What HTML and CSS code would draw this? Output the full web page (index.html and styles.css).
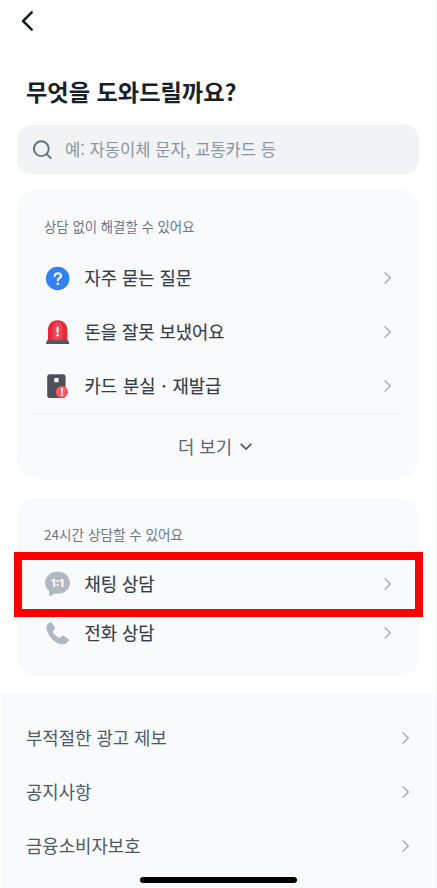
FILE: index.html
```html
<!DOCTYPE html>
<html lang="ko">
<head>
<meta charset="utf-8">
<title>고객센터</title>
<link rel="stylesheet" href="styles.css">
</head>
<body>
<svg class="defs" width="0" height="0">
  <symbol id="next" viewBox="0 0 8 12"><path d="M1.2 1 6.3 6l-5.1 5" fill="none" stroke="currentColor" stroke-width="1.7" stroke-linecap="round" stroke-linejoin="round"/></symbol>
</svg>
<main class="screen">
  <header class="topbar">
    <svg width="14" height="22" viewBox="0 0 14 22"><path d="M11.700 2.300 3.100 11l8.600 8.700" fill="none" stroke="#171c26" stroke-width="2.500" stroke-linecap="round" stroke-linejoin="round"/></svg>
  </header>
  <h1 class="title">무엇을 도와드릴까요?</h1>
  <div class="search">
    <svg width="20" height="20" viewBox="0 0 20 20"><g fill="none" stroke="#64707f" stroke-width="1.9" stroke-linecap="round"><circle cx="8.3" cy="8.7" r="7.4"/><path d="m13.8 14.2 4 3.9"/></g></svg>
    <span>예: 자동이체 문자, 교통카드 등</span>
  </div>

  <section class="card self-help">
    <h2 class="caption">상담 없이 해결할 수 있어요</h2>
    <ul class="list">
      <li class="row">
        <svg class="icon" viewBox="0 0 26 26"><circle cx="12.700" cy="13.500" r="11.8" fill="#3182f6"/><path d="M9.700 11c0-3.700 6.300-3.600 6.300-.1 0 2.200-3.200 2.200-3.200 4.400" fill="none" stroke="#fff" stroke-width="2.200" stroke-linecap="round"/><circle cx="12.800" cy="18.800" r="1.35" fill="#fff"/></svg>
        <span class="label">자주 묻는 질문</span><svg class="next"><use href="#next"/></svg>
      </li>
      <li class="row">
        <svg class="icon" viewBox="0 0 26 26"><path d="M2.900 22V11.400C2.900 5 7 1.200 12.600 1.200s9.800 3.800 9.800 10.200V22z" fill="#e42939"/><path d="M7.600 22V9.500c0-8.700 10-8.700 10 0V22z" fill="#f04452"/><path d="M2 21.300h21.200l1.200 3.700H.9z" fill="#4e5968"/><path d="M12.600 8.600v4.600" stroke="#fff" stroke-width="2.100" stroke-linecap="round"/><circle cx="12.600" cy="16.300" r="1.2" fill="#fff"/></svg>
        <span class="label">돈을 잘못 보냈어요</span><svg class="next"><use href="#next"/></svg>
      </li>
      <li class="row">
        <svg class="icon" viewBox="0 0 26 26"><rect x="2.2" y="1.200" width="18.4" height="23.800" rx="2.7" fill="#4c515c"/><rect x="9.3" y="5" width="4.2" height="4.3" rx=".5" fill="#fff"/><circle cx="17" cy="19" r="6.1" fill="#ff5963"/><path d="M17 15.700v3.700" stroke="#fff" stroke-width="1.8" stroke-linecap="round"/><circle cx="17" cy="22" r="1" fill="#fff"/></svg>
        <span class="label wide">카드 분실 · 재발급</span><svg class="next"><use href="#next"/></svg>
      </li>
    </ul>
    <div class="more"><span>더 보기</span><svg width="12" height="8" viewBox="0 0 12 8"><path d="m1.200 1.300 4.800 4.900 4.800-4.900" fill="none" stroke="#57616f" stroke-width="1.8" stroke-linecap="round" stroke-linejoin="round"/></svg></div>
  </section>

  <section class="card contact">
    <h2 class="caption">24시간 상담할 수 있어요</h2>
    <ul class="list">
      <li class="row highlighted">
        <svg class="icon" viewBox="0 0 26 26"><path d="M12.500.7C5.300.7.100 5.500.100 11.700c0 3.800 1.500 6.400 4.200 8.400v4.200c0 .9.700 1.200 1.400.8l4-2.500c1 .2 1.900.2 2.800.2 7.200 0 12.500-4.700 12.500-11S19.700.7 12.500.7z" fill="#b0b8c1"/><text class="ratio" x="12.500" y="15.700" text-anchor="middle">1:1</text></svg>
        <span class="label">채팅 상담</span><svg class="next"><use href="#next"/></svg>
      </li>
      <li class="row">
        <svg class="icon" viewBox="0 0 26 26"><path d="M4.900 2.400C2.300 3.500.8 6.200 1.600 9.800c1.800 7 8.200 13.200 14.600 14.400 3.200.6 6-.8 7.500-3.100.5-.8.3-1.500-.4-2l-4.200-3c-.8-.6-1.700-.5-2.400.1l-1.600 1.300c-.6.5-1.300.4-1.900 0-2-1.300-3.600-2.900-4.900-4.900-.4-.6-.4-1.200.1-1.800l1.200-1.500c.6-.7.7-1.500.1-2.300L7.100 2.900c-.6-.8-1.300-.9-2.200-.5z" fill="#b0b8c1"/></svg>
        <span class="label">전화 상담</span><svg class="next"><use href="#next"/></svg>
      </li>
    </ul>
  </section>

  <footer class="links">
    <div class="link"><span>부적절한 광고 제보</span><svg class="next"><use href="#next"/></svg></div>
    <div class="link"><span>공지사항</span><svg class="next"><use href="#next"/></svg></div>
    <div class="link"><span>금융소비자보호</span><svg class="next"><use href="#next"/></svg></div>
    <div class="home"></div>
  </footer>
</main>
</body>
</html>
```
FILE: styles.css
```css
*, *::after { box-sizing: border-box; }
body { margin: 0; background: #fff; font-family: "Noto Sans CJK KR", sans-serif; }
svg { display: block; flex: none; }
.defs { position: absolute; }
.screen { width: 437px; height: 888px; overflow: hidden; border-right: 1px solid #f1f2f4; }
.topbar { height: 73px; padding: 10px 20px; }
.title { margin: 0 0 16px; padding-left: 26px; font-size: 23.2px; line-height: 36px; font-weight: 700; color: #191f28; white-space: nowrap; }
.search { display: flex; align-items: center; gap: 12px; width: 402px; height: 49px; margin-left: 17px; padding-left: 16px; border-radius: 14px; background: #f1f3f5; color: #8b95a1; font-size: 16.6px; line-height: 24px; white-space: nowrap; }
.search span { padding-bottom: 1px; }
.card { width: 402px; margin-left: 17px; border-radius: 19px; background: #f9fafc; }
.self-help { height: 289px; margin-top: 16px; padding-top: 25px; }
.contact { height: 178px; margin-top: 19px; padding-top: 25px; }
.caption { margin: 0; padding-left: 27px; font-size: 13.4px; line-height: 22px; font-weight: 400; color: #6b7684; }
.contact .caption { font-size: 13.6px; }
.list { margin: 14px 0 0; padding: 0; list-style: none; }
.row { position: relative; display: flex; align-items: center; height: 54px; padding: 0 27px 0 28px; }
.icon { width: 26px; height: 26px; }
.label { flex: 1; margin-left: 13.4px; padding-bottom: 2px; font-size: 17.7px; line-height: 26px; color: #333d4b; -webkit-text-stroke: .15px #333d4b; white-space: nowrap; }
.wide { word-spacing: 1.1px; }
.next { width: 8px; height: 12px; color: #a9b2bd; }
.more { display: flex; align-items: center; justify-content: center; gap: 8px; height: 66px; margin: 0 15px; padding-right: 6px; border-top: 1px solid #eceef1; color: #5b6573; font-size: 17.8px; }
.more span { padding-bottom: 2px; }
.contact .row { height: 49px; }
.highlighted::after { content: ""; position: absolute; left: -3px; top: -7px; width: 409px; height: 65px; border: 8px solid #f00; }
.ratio { font: 800 10.5px Inter, sans-serif; fill: #fff; }
.links { position: relative; height: 194px; margin: 18px 1px 0; padding: 17px 25px 0; background: #f9fafc; }
.link { display: flex; align-items: center; justify-content: space-between; height: 54px; color: #4e5968; font-size: 17.8px; }
.link span { padding-bottom: 2px; }
.home { position: absolute; left: 139px; bottom: 5px; width: 157px; height: 6px; border-radius: 3px; background: #000; }
```
